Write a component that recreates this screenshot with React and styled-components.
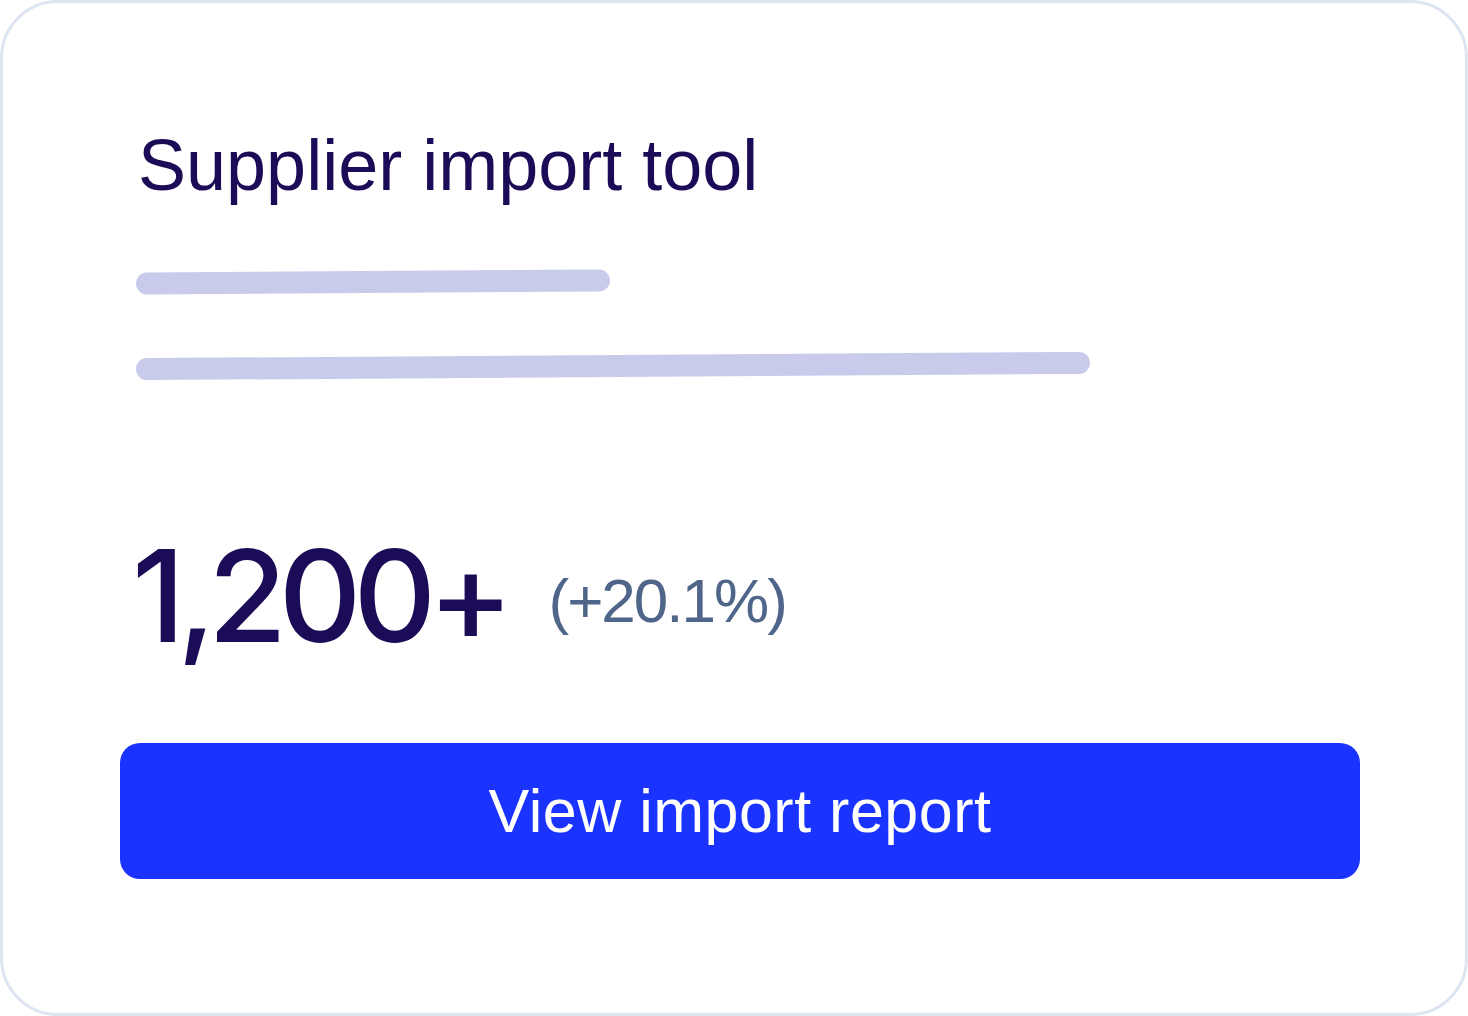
import React from "react";
import styled, { createGlobalStyle } from "styled-components";

const GlobalStyle = createGlobalStyle`
  html, body {
    margin: 0;
    padding: 0;
    background: #ffffff;
  }
  * { box-sizing: border-box; }
`;

const Card = styled.div`
  width: 1468px;
  height: 1016px;
  border: 3px solid #dde4f2;
  border-radius: 58px;
  background: #ffffff;
  padding: 126px 105px 0 117px;
  display: flex;
  flex-direction: column;
  font-family: "Liberation Sans", Arial, sans-serif;
`;

const Title = styled.h1`
  margin: 0 0 0 18px;
  font-size: 72px;
  line-height: 72px;
  font-weight: 400;
  color: #1c0c57;
  letter-spacing: 0;
`;

const Bar = styled.div`
  width: ${(p) => p.$w}px;
  height: 22px;
  margin-left: 16px;
  margin-top: ${(p) => p.$top}px;
  border-radius: 11px;
  background: #c8cbea;
  transform: rotate(-0.38deg);
`;

const StatRow = styled.div`
  margin-top: 154px;
  display: flex;
  align-items: center;
`;

const BigNumber = styled.span`
  margin-left: 12px;
  font-family: Inter, "Liberation Sans", sans-serif;
  font-size: 128px;
  line-height: 130px;
  font-weight: 500;
  color: #1c0c57;
  letter-spacing: -8px;
`;

const Change = styled.span`
  margin-left: 43px;
  margin-top: 10px;
  font-size: 62px;
  line-height: 62px;
  color: #4f6589;
  letter-spacing: -2px;
`;

const Button = styled.button`
  margin-top: 82px;
  width: 100%;
  height: 136px;
  border: none;
  border-radius: 20px;
  background: #1a33ff;
  color: #ffffff;
  font-family: "Liberation Sans", Arial, sans-serif;
  font-size: 61px;
  font-weight: 400;
  letter-spacing: 0.5px;
  cursor: pointer;
  display: flex;
  align-items: center;
  justify-content: center;
  padding: 0;
`;

export default function App() {
  return (
    <>
      <GlobalStyle />
      <Card>
        <Title>Supplier import tool</Title>
        <Bar $w={474} $top={70} />
        <Bar $w={954} $top={62} />
        <StatRow>
          <BigNumber>1,200+</BigNumber>
          <Change>(+20.1%)</Change>
        </StatRow>
        <Button>View import report</Button>
      </Card>
    </>
  );
}
